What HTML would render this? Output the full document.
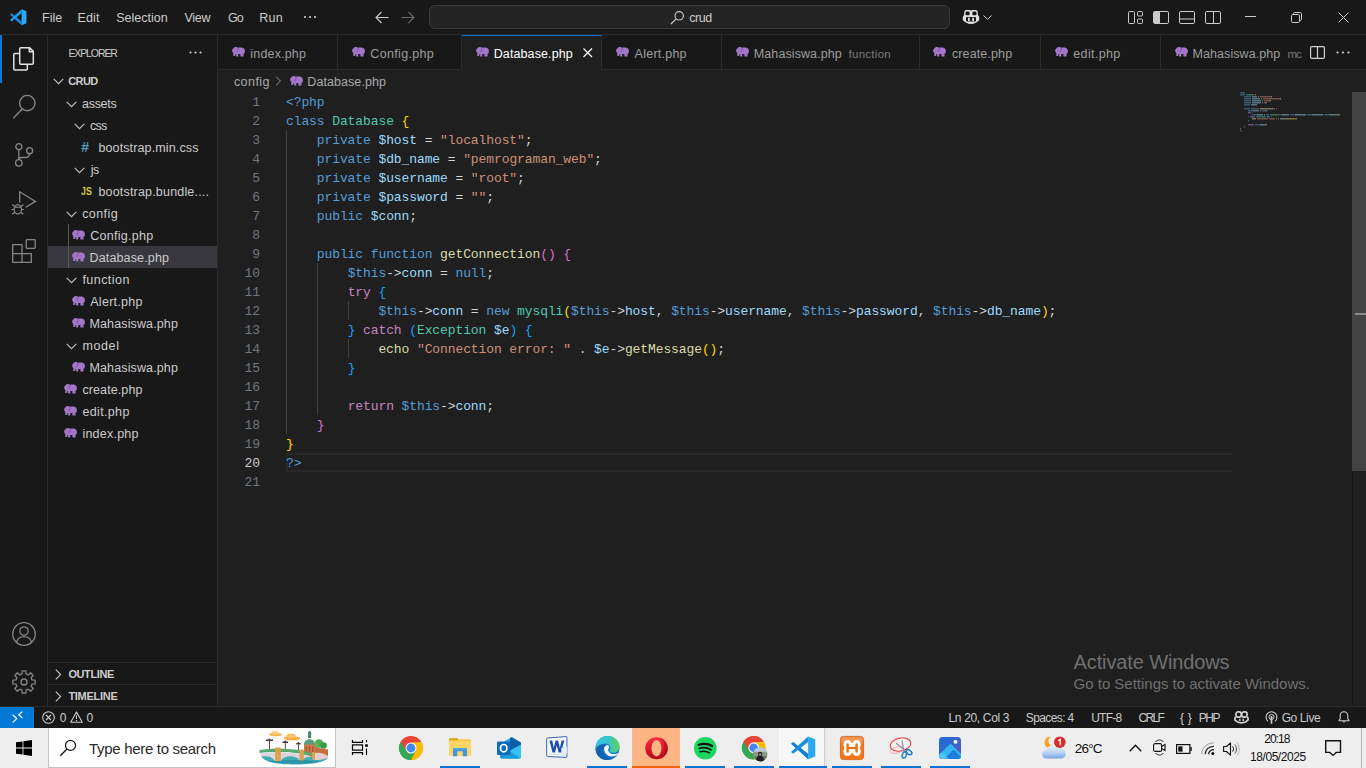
<!DOCTYPE html>
<html>
<head>
<meta charset="utf-8">
<title>Database.php - crud - Visual Studio Code</title>
<style>
*{box-sizing:border-box;margin:0;padding:0}
html,body{width:1366px;height:768px;overflow:hidden;background:#1f1f1f;font-family:"Liberation Sans",sans-serif;font-size:13px;color:#ccc}
.abs{position:absolute}
.t{position:absolute;white-space:pre}
svg{display:block;overflow:visible}
#title{position:absolute;left:0;top:0;width:1366px;height:35px;background:#181818;border-bottom:1px solid #2b2b2b}
#search{position:absolute;left:429px;top:5px;width:521px;height:24px;border:1px solid #3a3a3a;border-radius:6px;background:#242424}
#act{position:absolute;left:0;top:35px;width:48px;height:672px;background:#181818;border-right:1px solid #2b2b2b}
#side{position:absolute;left:48px;top:35px;width:170px;height:672px;background:#181818;border-right:1px solid #2b2b2b}
#tabs{position:absolute;left:218px;top:35px;width:1148px;height:35px;background:#181818;border-bottom:1px solid #2b2b2b}
.tab{position:absolute;top:0;height:35px;border-right:1px solid #2b2b2b}
#ed{position:absolute;left:218px;top:70px;width:1148px;height:637px;background:#1f1f1f}
.ln{position:absolute;left:0;width:42px;text-align:right;height:19px;line-height:19px;font-family:"Liberation Mono",monospace;font-size:13px;letter-spacing:-0.1px;color:#6e7681}
.cl{position:absolute;left:68px;height:19px;line-height:19px;font-family:"Liberation Mono",monospace;font-size:13px;letter-spacing:-0.1px;color:#d4d4d4;white-space:pre}
.k{color:#569cd6}.c{color:#4ec9b0}.v{color:#9cdcfe}.s{color:#ce9178}.f{color:#dcdcaa}.p{color:#c586c0}
.b1{color:#ffd700}.b2{color:#da70d6}.b3{color:#179fff}
.g{position:absolute;width:1px;background:#404040}
#status{position:absolute;left:0;top:706px;width:1366px;height:22px;background:#181818;border-top:1px solid #2b2b2b}
#task{position:absolute;left:0;top:728px;width:1366px;height:40px;background:#eeeeee}
</style>
</head>
<body>
<svg width="0" height="0" style="position:absolute"><defs>
<symbol id="el" viewBox="0 0 13 10"><path d="M1 1.800 C1.500 .6 3 .1 4.100 .1 C5 .1 5.600 .4 6 .8 C7.500 .5 9.300 .5 10.600 .8 C12.100 1.200 12.900 2.600 12.900 4.200 C12.900 5.500 12.300 6.400 11.500 6.900 V9.600 H8.400 V7.100 H6.300 V9.600 H4.200 V7.500 L3.300 7.100 V9 H1.300 V6.100 C.5 5.400 .1 4.500 .1 3.500 C.1 2.800 .4 2.200 1 1.800 Z" fill="#a476c8"/><path d="M5.900 .9 C6.100 2.200 6 3.500 5.500 4.100 C5.100 4.500 4.500 4.500 4.100 4.300" stroke="#6f45a8" stroke-width=".7" fill="none"/></symbol>
<symbol id="chd" viewBox="0 0 11 7"><path d="M.7 .8 L5.500 5.600 L10.300 .8" stroke="#c5c5c5" stroke-width="1.100" fill="none"/></symbol>
<symbol id="chr" viewBox="0 0 7 11"><path d="M.8 .7 L5.600 5.500 L.8 10.300" stroke="#c5c5c5" stroke-width="1.100" fill="none"/></symbol>
<symbol id="chr2" viewBox="0 0 7 11"><path d="M.8 .7 L5.600 5.500 L.8 10.300" stroke="#9a9a9a" stroke-width="1" fill="none"/></symbol>
<symbol id="cop" viewBox="0 0 18 16"><path d="M4.500 1 h3 a2 2 0 0 1 1.500 .8 a2 2 0 0 1 1.500 -.8 h3 a2.300 2.300 0 0 1 2.300 2.300 v2.400 l1.400 2.300 v3 c-1.500 2.300 -5 4 -8.200 4 s-6.700 -1.700 -8.200 -4 v-3 l1.400 -2.300 v-2.400 a2.300 2.300 0 0 1 2.300 -2.300 z" fill="#e0e0e0"/><rect x="3.500" y="2.400" width="4.200" height="3.900" rx="1.300" fill="#181818"/><rect x="10.300" y="2.400" width="4.200" height="3.900" rx="1.300" fill="#181818"/><rect x="4" y="8" width="10" height="4.500" rx="1" fill="#181818"/><rect x="6" y="8.700" width="1.800" height="3.300" fill="#e0e0e0"/><rect x="10.200" y="8.700" width="1.800" height="3.300" fill="#e0e0e0"/></symbol>
</defs></svg>
<div id="title">
<svg class="abs" style="left:9.800px;top:8.700px" width="16.600" height="16.500" viewBox="0 0 100 100" preserveAspectRatio="none"><path d="M0 33 L9 25 L70 75 L70 98 Z" fill="#1690e3"/><path d="M0 67 L9 75 L70 25 L70 2 Z" fill="#1f9cee"/><path d="M70 2 L99 14 L99 86 L70 98 Z" fill="#2ba9f5"/></svg>
<span class="t" style="left:42.10px;top:9.00px;font-size:12.5px;line-height:18px;color:#ccc;letter-spacing:0.003px;">File</span>
<span class="t" style="left:77.50px;top:9.00px;font-size:12.5px;line-height:18px;color:#ccc;letter-spacing:0.145px;">Edit</span>
<span class="t" style="left:116.20px;top:9.00px;font-size:12.5px;line-height:18px;color:#ccc;letter-spacing:0.004px;">Selection</span>
<span class="t" style="left:184.50px;top:9.00px;font-size:12.5px;line-height:18px;color:#ccc;letter-spacing:-0.314px;">View</span>
<span class="t" style="left:228.00px;top:9.00px;font-size:12.5px;line-height:18px;color:#ccc;letter-spacing:-0.923px;">Go</span>
<span class="t" style="left:259.30px;top:9.00px;font-size:12.5px;line-height:18px;color:#ccc;letter-spacing:0.260px;">Run</span>
<svg class="abs" style="left:303px;top:15px" width="14" height="4"><circle cx="2" cy="2" r="1.100" fill="#ccc"/><circle cx="7" cy="2" r="1.100" fill="#ccc"/><circle cx="12" cy="2" r="1.100" fill="#ccc"/></svg>
<svg class="abs" style="left:375px;top:11px" width="14" height="13" viewBox="0 0 14 13"><path d="M6.500 1 L1 6.500 L6.500 12 M1 6.500 H13.500" stroke="#ccc" stroke-width="1.100" fill="none"/></svg>
<svg class="abs" style="left:401px;top:11px" width="14" height="13" viewBox="0 0 14 13"><path d="M7.500 1 L13 6.500 L7.500 12 M13 6.500 H0.500" stroke="#6b6b6b" stroke-width="1.100" fill="none"/></svg>
<div id="search">
<svg class="abs" style="left:240px;top:4px" width="15" height="15" viewBox="0 0 15 15"><circle cx="9.200" cy="5.800" r="4.200" stroke="#ccc" stroke-width="1.100" fill="none"/><path d="M6.200 8.800 L1 14" stroke="#ccc" stroke-width="1.200"/></svg>
<span class="t" style="left:259.20px;top:3.00px;font-size:12.5px;line-height:18px;color:#ccc;letter-spacing:-0.422px;">crud</span>
</div>
<svg class="abs" style="left:962px;top:9px" width="18" height="16"><use href="#cop"/></svg>
<svg class="abs" style="left:983px;top:15px" width="9" height="5" viewBox="0 0 9 5"><path d="M.5 .5 L4.500 4.300 L8.500 .5" stroke="#ccc" stroke-width="1" fill="none"/></svg>
<svg class="abs" style="left:1128px;top:11px" width="15" height="13" viewBox="0 0 15 13"><rect x=".5" y=".5" width="6" height="12" rx="1" stroke="#ccc" fill="none"/><rect x="9.500" y=".5" width="5" height="4.500" rx="1" stroke="#ccc" fill="none"/><rect x="9.500" y="8" width="5" height="4.500" rx="1" stroke="#ccc" fill="none"/></svg>
<svg class="abs" style="left:1153px;top:10.500px" width="16" height="13" viewBox="0 0 16 13"><rect x=".5" y=".5" width="15" height="12" rx="1.300" stroke="#ccc" fill="none"/><path d="M1 1 h6 v11 h-6 z" fill="#ccc"/></svg>
<svg class="abs" style="left:1179px;top:10.500px" width="16" height="13" viewBox="0 0 16 13"><rect x=".5" y=".5" width="15" height="12" rx="1.300" stroke="#ccc" fill="none"/><path d="M.5 8 h15" stroke="#ccc"/></svg>
<svg class="abs" style="left:1205px;top:10.500px" width="16" height="13" viewBox="0 0 16 13"><rect x=".5" y=".5" width="15" height="12" rx="1.300" stroke="#ccc" fill="none"/><path d="M8.500 .5 v12" stroke="#ccc"/></svg>
<svg class="abs" style="left:1245px;top:16px" width="11" height="1"><rect width="11" height="1" fill="#ccc"/></svg>
<svg class="abs" style="left:1291px;top:12px" width="11" height="11" viewBox="0 0 11 11"><rect x=".5" y="2.500" width="8" height="8" rx="1.200" stroke="#ccc" fill="none"/><path d="M2.500 2.500 v-.8 a1.200 1.200 0 0 1 1.200 -1.200 h5.600 a1.200 1.200 0 0 1 1.200 1.200 v5.600 a1.200 1.200 0 0 1 -1.200 1.200 h-.8" stroke="#ccc" fill="none"/></svg>
<svg class="abs" style="left:1338px;top:12px" width="11" height="11" viewBox="0 0 11 11"><path d="M.5 .5 L10.500 10.500 M10.500 .5 L.5 10.500" stroke="#ccc" stroke-width="1" fill="none"/></svg>
</div>
<div id="act">
<div class="abs" style="left:0;top:0;width:2px;height:48px;background:#0078d4"></div>
<svg class="abs" style="left:12px;top:11px" width="24" height="26" viewBox="0 0 24 26"><path d="M7.700 7.600 H2.800 a1 1 0 0 0 -1 1 V23 a1 1 0 0 0 1 1 H14.300 a1 1 0 0 0 1 -1 V18.300" stroke="#e0e0e0" stroke-width="1.500" fill="none"/><path d="M8.700 1.800 H17.700 L21.300 5.400 V17.300 a1 1 0 0 1 -1 1 H8.700 a1 1 0 0 1 -1 -1 V2.800 a1 1 0 0 1 1 -1 z M17.300 2 V5.800 H21" stroke="#e0e0e0" stroke-width="1.500" fill="none" stroke-linejoin="round"/></svg>
<svg class="abs" style="left:12px;top:58px" width="26" height="26" viewBox="0 0 26 26"><circle cx="15.300" cy="10.100" r="7.700" stroke="#868686" stroke-width="1.400" fill="none"/><path d="M10.200 16 L1.300 25.300" stroke="#868686" stroke-width="1.500"/></svg>
<svg class="abs" style="left:12px;top:106px" width="24" height="28" viewBox="0 0 24 28"><circle cx="6.800" cy="5.600" r="3" stroke="#868686" stroke-width="1.300" fill="none"/><circle cx="6.800" cy="21.900" r="3.200" stroke="#868686" stroke-width="1.300" fill="none"/><circle cx="17.600" cy="9.700" r="3" stroke="#868686" stroke-width="1.300" fill="none"/><path d="M6.800 8.600 V18.700 M17.600 12.700 c0 3 -2.500 3.800 -5 3.800 h-3 c-1.500 0 -2.700 .6 -2.700 2" stroke="#868686" stroke-width="1.300" fill="none"/></svg>
<svg class="abs" style="left:10px;top:154px" width="28" height="28" viewBox="0 0 28 28"><path d="M9.700 13.500 V2.800 L25.500 12.400 L15.800 18.300" stroke="#868686" stroke-width="1.300" fill="none" stroke-linejoin="miter"/><ellipse cx="7.800" cy="20.300" rx="3.700" ry="4.600" stroke="#868686" stroke-width="1.300" fill="none"/><path d="M4.500 18.200 h6.600 M1.500 20.500 h2.600 M11.500 20.500 h2.600 M2.200 15.500 l2.600 2 M13.400 15.500 l-2.600 2 M2.200 25.300 l2.600 -2 M13.400 25.300 l-2.600 -2" stroke="#868686" stroke-width="1.200" fill="none"/></svg>
<svg class="abs" style="left:12px;top:203px" width="25" height="25" viewBox="0 0 25 25"><path d="M.7 6.700 H10 V15.700 H19.300 V24.300 H.7 Z M.7 15.700 H10 V24.300" stroke="#868686" stroke-width="1.300" fill="none"/><rect x="14.200" y="1.700" width="9" height="8.600" rx=".8" stroke="#868686" stroke-width="1.300" fill="none"/></svg>
<svg class="abs" style="left:12px;top:587px" width="24" height="24" viewBox="0 0 24 24"><circle cx="12" cy="12" r="11.300" stroke="#868686" stroke-width="1.300" fill="none"/><circle cx="12" cy="9" r="4.200" stroke="#868686" stroke-width="1.300" fill="none"/><path d="M4.500 20.300 c1 -4 4 -5.600 7.500 -5.600 s6.500 1.600 7.500 5.600" stroke="#868686" stroke-width="1.300" fill="none"/></svg>
<svg class="abs" style="left:12px;top:634.700px" width="24" height="24" viewBox="0 0 24 24"><path d="M9.95 3.96 L10.09 0.86 L13.91 0.86 L14.05 3.96 L16.23 4.86 L18.52 2.77 L21.23 5.48 L19.14 7.77 L20.04 9.95 L23.14 10.09 L23.14 13.91 L20.04 14.05 L19.14 16.23 L21.23 18.52 L18.52 21.23 L16.23 19.14 L14.05 20.04 L13.91 23.14 L10.09 23.14 L9.95 20.04 L7.77 19.14 L5.48 21.23 L2.77 18.52 L4.86 16.23 L3.96 14.05 L0.86 13.91 L0.86 10.09 L3.96 9.95 L4.86 7.77 L2.77 5.48 L5.48 2.77 L7.77 4.86 Z" stroke="#868686" stroke-width="1.300" fill="none" stroke-linejoin="round"/><circle cx="12" cy="12" r="3" stroke="#868686" stroke-width="1.300" fill="none"/></svg>
</div>
<div id="side">
<span class="t" style="left:20.40px;top:10.00px;font-size:10.5px;line-height:16px;color:#ccc;letter-spacing:-1.100px;">EXPLORER</span>
<svg class="abs" style="left:141px;top:16px" width="13" height="3"><circle cx="1.500" cy="1.500" r="1.100" fill="#ccc"/><circle cx="6.500" cy="1.500" r="1.100" fill="#ccc"/><circle cx="11.500" cy="1.500" r="1.100" fill="#ccc"/></svg>
<div class="abs" style="left:0;top:211px;width:169px;height:22px;background:#37373d"></div>
<div class="abs" style="left:20px;top:189px;width:1px;height:44px;background:#585858"></div>
<svg class="abs" style="left:5px;top:43px" width="11" height="7"><use href="#chd"/></svg>
<span class="t" style="left:20.30px;top:38.00px;font-size:11px;line-height:16px;color:#ccc;letter-spacing:-0.644px;font-weight:bold;">CRUD</span>
<svg class="abs" style="left:18px;top:65.5px" width="11" height="7"><use href="#chd"/></svg>
<span class="t" style="left:34.10px;top:60.00px;font-size:12.5px;line-height:18px;color:#ccc;letter-spacing:-0.315px;">assets</span>
<svg class="abs" style="left:26px;top:87.5px" width="11" height="7"><use href="#chd"/></svg>
<span class="t" style="left:42.00px;top:82.00px;font-size:12.5px;line-height:18px;color:#ccc;letter-spacing:-0.750px;">css</span>
<span class="t" style="left:33.30px;top:102.00px;font-size:14px;line-height:20px;color:#519aba;letter-spacing:0.000px;font-weight:bold;">#</span>
<span class="t" style="left:50.40px;top:104.00px;font-size:12.5px;line-height:18px;color:#ccc;letter-spacing:0.131px;">bootstrap.min.css</span>
<svg class="abs" style="left:26px;top:131.5px" width="11" height="7"><use href="#chd"/></svg>
<span class="t" style="left:42.70px;top:126.00px;font-size:12.5px;line-height:18px;color:#ccc;letter-spacing:-0.477px;">js</span>
<span class="t" style="left:33.40px;top:148.00px;font-size:10.5px;line-height:16px;color:#cbcb41;letter-spacing:0.000px;font-weight:bold;transform:scaleX(.84);transform-origin:0 0;">JS</span>
<span class="t" style="left:50.40px;top:148.00px;font-size:12.5px;line-height:18px;color:#ccc;letter-spacing:0.187px;">bootstrap.bundle....</span>
<svg class="abs" style="left:18px;top:175.5px" width="11" height="7"><use href="#chd"/></svg>
<span class="t" style="left:34.20px;top:170.00px;font-size:12.5px;line-height:18px;color:#ccc;letter-spacing:0.419px;">config</span>
<svg class="abs" style="left:23.5px;top:195px" width="13" height="10"><use href="#el"/></svg>
<span class="t" style="left:42.25px;top:192.00px;font-size:12.5px;line-height:18px;color:#ccc;letter-spacing:0.282px;">Config.php</span>
<svg class="abs" style="left:23.5px;top:217px" width="13" height="10"><use href="#el"/></svg>
<span class="t" style="left:41.50px;top:214.00px;font-size:12.5px;line-height:18px;color:#ccc;letter-spacing:0.147px;">Database.php</span>
<svg class="abs" style="left:18px;top:241.5px" width="11" height="7"><use href="#chd"/></svg>
<span class="t" style="left:34.40px;top:236.00px;font-size:12.5px;line-height:18px;color:#ccc;letter-spacing:0.453px;">function</span>
<svg class="abs" style="left:23.5px;top:261px" width="13" height="10"><use href="#el"/></svg>
<span class="t" style="left:42.25px;top:258.00px;font-size:12.5px;line-height:18px;color:#ccc;letter-spacing:0.271px;">Alert.php</span>
<svg class="abs" style="left:23.5px;top:283px" width="13" height="10"><use href="#el"/></svg>
<span class="t" style="left:41.50px;top:280.00px;font-size:12.5px;line-height:18px;color:#ccc;letter-spacing:0.125px;">Mahasiswa.php</span>
<svg class="abs" style="left:18px;top:307.5px" width="11" height="7"><use href="#chd"/></svg>
<span class="t" style="left:34.40px;top:302.00px;font-size:12.5px;line-height:18px;color:#ccc;letter-spacing:0.633px;">model</span>
<svg class="abs" style="left:23.5px;top:327px" width="13" height="10"><use href="#el"/></svg>
<span class="t" style="left:41.50px;top:324.00px;font-size:12.5px;line-height:18px;color:#ccc;letter-spacing:0.125px;">Mahasiswa.php</span>
<svg class="abs" style="left:15.5px;top:349px" width="13" height="10"><use href="#el"/></svg>
<span class="t" style="left:34.40px;top:346.00px;font-size:12.5px;line-height:18px;color:#ccc;letter-spacing:0.109px;">create.php</span>
<svg class="abs" style="left:15.5px;top:371px" width="13" height="10"><use href="#el"/></svg>
<span class="t" style="left:34.40px;top:368.00px;font-size:12.5px;line-height:18px;color:#ccc;letter-spacing:0.353px;">edit.php</span>
<svg class="abs" style="left:15.5px;top:393px" width="13" height="10"><use href="#el"/></svg>
<span class="t" style="left:34.40px;top:390.00px;font-size:12.5px;line-height:18px;color:#ccc;letter-spacing:0.230px;">index.php</span>
<div class="abs" style="left:0;top:627px;width:169px;height:1px;background:#2b2b2b"></div>
<svg class="abs" style="left:7px;top:634px" width="7" height="11"><use href="#chr"/></svg>
<span class="t" style="left:20.40px;top:631.00px;font-size:11px;line-height:16px;color:#ccc;letter-spacing:-0.390px;font-weight:bold;">OUTLINE</span>
<div class="abs" style="left:0;top:649px;width:169px;height:1px;background:#2b2b2b"></div>
<svg class="abs" style="left:7px;top:656px" width="7" height="11"><use href="#chr"/></svg>
<span class="t" style="left:20.40px;top:653.00px;font-size:11px;line-height:16px;color:#ccc;letter-spacing:-0.271px;font-weight:bold;">TIMELINE</span>
</div>
<div id="tabs">
<div class="tab" style="left:0px;width:120px;"><svg class="abs" style="left:13.5px;top:12px" width="13" height="10"><use href="#el"/></svg><span class="t" style="left:32.30px;top:10.00px;font-size:12.5px;line-height:18px;color:#9d9d9d;letter-spacing:0.180px;">index.php</span></div>
<div class="tab" style="left:120px;width:124px;"><svg class="abs" style="left:13.5px;top:12px" width="13" height="10"><use href="#el"/></svg><span class="t" style="left:32.30px;top:10.00px;font-size:12.5px;line-height:18px;color:#9d9d9d;letter-spacing:0.332px;">Config.php</span></div>
<div class="tab" style="left:244px;width:140px;background:#1f1f1f;border-top:1px solid #0078d4;height:36px;"><svg class="abs" style="left:13.5px;top:11px" width="13" height="10"><use href="#el"/></svg><span class="t" style="left:31.70px;top:9.00px;font-size:12.5px;line-height:18px;color:#fff;letter-spacing:0.110px;">Database.php</span><svg class="abs" style="left:121px;top:12px" width="10" height="10" viewBox="0 0 10 10"><path d="M.5 .5 L9 9 M9 .5 L.5 9" stroke="#fff" stroke-width="1.200"/></svg></div>
<div class="tab" style="left:384px;width:120px;"><svg class="abs" style="left:13.5px;top:12px" width="13" height="10"><use href="#el"/></svg><span class="t" style="left:32.60px;top:10.00px;font-size:12.5px;line-height:18px;color:#9d9d9d;letter-spacing:0.240px;">Alert.php</span></div>
<div class="tab" style="left:504px;width:198px;"><svg class="abs" style="left:13.5px;top:12px" width="13" height="10"><use href="#el"/></svg><span class="t" style="left:31.80px;top:10.00px;font-size:12.5px;line-height:18px;color:#9d9d9d;letter-spacing:0.092px;">Mahasiswa.php</span><span class="t" style="left:126.50px;top:11.00px;font-size:11.5px;line-height:16px;color:#7a7a7a;letter-spacing:0.274px;">function</span></div>
<div class="tab" style="left:702px;width:121px;"><svg class="abs" style="left:13px;top:12px" width="13" height="10"><use href="#el"/></svg><span class="t" style="left:31.90px;top:10.00px;font-size:12.5px;line-height:18px;color:#9d9d9d;letter-spacing:0.131px;">create.php</span></div>
<div class="tab" style="left:823px;width:120px;"><svg class="abs" style="left:13.5px;top:12px" width="13" height="10"><use href="#el"/></svg><span class="t" style="left:32.30px;top:10.00px;font-size:12.5px;line-height:18px;color:#9d9d9d;letter-spacing:0.353px;">edit.php</span></div>
<div class="tab" style="left:943px;width:142px;border-right:none;overflow:hidden;width:142px;"><svg class="abs" style="left:13.5px;top:12px" width="13" height="10"><use href="#el"/></svg><span class="t" style="left:31.50px;top:10.00px;font-size:12.5px;line-height:18px;color:#9d9d9d;letter-spacing:0.075px;">Mahasiswa.php</span><span class="t" style="left:126.50px;top:11.00px;font-size:11.5px;line-height:16px;color:#7a7a7a;letter-spacing:-1.180px;">mc</span></div>
<svg class="abs" style="left:1092px;top:11px" width="15" height="13" viewBox="0 0 15 13"><rect x=".6" y=".6" width="13.800" height="11.800" rx="1.200" stroke="#d0d0d0" stroke-width="1.200" fill="none"/><path d="M7.500 .6 v11.800" stroke="#d0d0d0" stroke-width="1.200"/></svg>
<svg class="abs" style="left:1118px;top:16px" width="14" height="3"><circle cx="1.500" cy="1.500" r="1.100" fill="#d0d0d0"/><circle cx="7" cy="1.500" r="1.100" fill="#d0d0d0"/><circle cx="12.500" cy="1.500" r="1.100" fill="#d0d0d0"/></svg>
</div>
<div id="ed">
<span class="t" style="left:15.90px;top:3.00px;font-size:12.5px;line-height:18px;color:#a9a9a9;letter-spacing:0.459px;">config</span>
<svg class="abs" style="left:57px;top:6px" width="7" height="10"><use href="#chr2"/></svg>
<svg class="abs" style="left:71.5px;top:6px" width="13" height="10"><use href="#el"/></svg>
<span class="t" style="left:89.30px;top:3.00px;font-size:12.5px;line-height:18px;color:#a9a9a9;letter-spacing:0.074px;">Database.php</span>
<div class="abs" style="left:68px;top:383px;width:946px;height:19px;border:2px solid #282828;border-right:none"></div>
<div class="g" style="left:68px;top:60px;height:304px"></div>
<div class="g" style="left:99px;top:193px;height:152px"></div>
<div class="g" style="left:130px;top:231px;height:19px"></div>
<div class="g" style="left:130px;top:269px;height:19px"></div>
<div class="ln" style="top:23px">1</div>
<div class="cl" style="top:23px"><span class="k">&lt;?php</span></div>
<div class="ln" style="top:42px">2</div>
<div class="cl" style="top:42px"><span class="k">class</span> <span class="c">Database</span> <span class="b1">{</span></div>
<div class="ln" style="top:61px">3</div>
<div class="cl" style="top:61px">    <span class="k">private</span> <span class="v">$host</span> = <span class="s">&quot;localhost&quot;</span>;</div>
<div class="ln" style="top:80px">4</div>
<div class="cl" style="top:80px">    <span class="k">private</span> <span class="v">$db_name</span> = <span class="s">&quot;pemrograman_web&quot;</span>;</div>
<div class="ln" style="top:99px">5</div>
<div class="cl" style="top:99px">    <span class="k">private</span> <span class="v">$username</span> = <span class="s">&quot;root&quot;</span>;</div>
<div class="ln" style="top:118px">6</div>
<div class="cl" style="top:118px">    <span class="k">private</span> <span class="v">$password</span> = <span class="s">&quot;&quot;</span>;</div>
<div class="ln" style="top:137px">7</div>
<div class="cl" style="top:137px">    <span class="k">public</span> <span class="v">$conn</span>;</div>
<div class="ln" style="top:156px">8</div>
<div class="ln" style="top:175px">9</div>
<div class="cl" style="top:175px">    <span class="k">public</span> <span class="k">function</span> <span class="f">getConnection</span><span class="b2">()</span> <span class="b2">{</span></div>
<div class="ln" style="top:194px">10</div>
<div class="cl" style="top:194px">        <span class="k">$this</span>-&gt;<span class="v">conn</span> = <span class="k">null</span>;</div>
<div class="ln" style="top:213px">11</div>
<div class="cl" style="top:213px">        <span class="p">try</span> <span class="b3">{</span></div>
<div class="ln" style="top:232px">12</div>
<div class="cl" style="top:232px">            <span class="k">$this</span>-&gt;<span class="v">conn</span> = <span class="k">new</span> <span class="c">mysqli</span><span class="b1">(</span><span class="k">$this</span>-&gt;<span class="v">host</span>, <span class="k">$this</span>-&gt;<span class="v">username</span>, <span class="k">$this</span>-&gt;<span class="v">password</span>, <span class="k">$this</span>-&gt;<span class="v">db_name</span><span class="b1">)</span>;</div>
<div class="ln" style="top:251px">13</div>
<div class="cl" style="top:251px">        <span class="b3">}</span> <span class="p">catch</span> <span class="b3">(</span><span class="c">Exception</span> <span class="v">$e</span><span class="b3">)</span> <span class="b3">{</span></div>
<div class="ln" style="top:270px">14</div>
<div class="cl" style="top:270px">            <span class="f">echo</span> <span class="s">&quot;Connection error: &quot;</span> . <span class="v">$e</span>-&gt;<span class="f">getMessage</span><span class="b1">()</span>;</div>
<div class="ln" style="top:289px">15</div>
<div class="cl" style="top:289px">        <span class="b3">}</span></div>
<div class="ln" style="top:308px">16</div>
<div class="ln" style="top:327px">17</div>
<div class="cl" style="top:327px">        <span class="p">return</span> <span class="k">$this</span>-&gt;<span class="v">conn</span>;</div>
<div class="ln" style="top:346px">18</div>
<div class="cl" style="top:346px">    <span class="b2">}</span></div>
<div class="ln" style="top:365px">19</div>
<div class="cl" style="top:365px"><span class="b1">}</span></div>
<div class="ln" style="top:384px;color:#ccc">20</div>
<div class="cl" style="top:384px"><span class="k">?&gt;</span></div>
<div class="ln" style="top:403px">21</div>
<svg class="abs" style="left:1022px;top:22px;opacity:.45" width="112" height="44" viewBox="0 0 112 44"><rect x="0" y="0" width="5" height="1.500" fill="#569cd6"/><rect x="0" y="2" width="5" height="1.500" fill="#569cd6"/><rect x="6" y="2" width="8" height="1.500" fill="#4ec9b0"/><rect x="15" y="2" width="1" height="1.500" fill="#ffd700"/><rect x="4" y="4" width="7" height="1.500" fill="#569cd6"/><rect x="12" y="4" width="5" height="1.500" fill="#9cdcfe"/><rect x="18" y="4" width="1" height="1.500" fill="#d4d4d4"/><rect x="20" y="4" width="11" height="1.500" fill="#ce9178"/><rect x="31" y="4" width="1" height="1.500" fill="#d4d4d4"/><rect x="4" y="6" width="7" height="1.500" fill="#569cd6"/><rect x="12" y="6" width="8" height="1.500" fill="#9cdcfe"/><rect x="21" y="6" width="1" height="1.500" fill="#d4d4d4"/><rect x="23" y="6" width="17" height="1.500" fill="#ce9178"/><rect x="40" y="6" width="1" height="1.500" fill="#d4d4d4"/><rect x="4" y="8" width="7" height="1.500" fill="#569cd6"/><rect x="12" y="8" width="9" height="1.500" fill="#9cdcfe"/><rect x="22" y="8" width="1" height="1.500" fill="#d4d4d4"/><rect x="24" y="8" width="6" height="1.500" fill="#ce9178"/><rect x="30" y="8" width="1" height="1.500" fill="#d4d4d4"/><rect x="4" y="10" width="7" height="1.500" fill="#569cd6"/><rect x="12" y="10" width="9" height="1.500" fill="#9cdcfe"/><rect x="22" y="10" width="1" height="1.500" fill="#d4d4d4"/><rect x="24" y="10" width="2" height="1.500" fill="#ce9178"/><rect x="26" y="10" width="1" height="1.500" fill="#d4d4d4"/><rect x="4" y="12" width="6" height="1.500" fill="#569cd6"/><rect x="11" y="12" width="5" height="1.500" fill="#9cdcfe"/><rect x="16" y="12" width="1" height="1.500" fill="#d4d4d4"/><rect x="4" y="16" width="6" height="1.500" fill="#569cd6"/><rect x="11" y="16" width="8" height="1.500" fill="#569cd6"/><rect x="20" y="16" width="13" height="1.500" fill="#dcdcaa"/><rect x="33" y="16" width="2" height="1.500" fill="#da70d6"/><rect x="36" y="16" width="1" height="1.500" fill="#da70d6"/><rect x="8" y="18" width="5" height="1.500" fill="#569cd6"/><rect x="13" y="18" width="2" height="1.500" fill="#d4d4d4"/><rect x="15" y="18" width="4" height="1.500" fill="#9cdcfe"/><rect x="20" y="18" width="1" height="1.500" fill="#d4d4d4"/><rect x="22" y="18" width="4" height="1.500" fill="#569cd6"/><rect x="26" y="18" width="1" height="1.500" fill="#d4d4d4"/><rect x="8" y="20" width="3" height="1.500" fill="#c586c0"/><rect x="12" y="20" width="1" height="1.500" fill="#179fff"/><rect x="12" y="22" width="5" height="1.500" fill="#569cd6"/><rect x="17" y="22" width="2" height="1.500" fill="#d4d4d4"/><rect x="19" y="22" width="4" height="1.500" fill="#9cdcfe"/><rect x="24" y="22" width="1" height="1.500" fill="#d4d4d4"/><rect x="26" y="22" width="3" height="1.500" fill="#569cd6"/><rect x="30" y="22" width="6" height="1.500" fill="#4ec9b0"/><rect x="36" y="22" width="1" height="1.500" fill="#ffd700"/><rect x="37" y="22" width="5" height="1.500" fill="#569cd6"/><rect x="42" y="22" width="2" height="1.500" fill="#d4d4d4"/><rect x="44" y="22" width="4" height="1.500" fill="#9cdcfe"/><rect x="48" y="22" width="1" height="1.500" fill="#d4d4d4"/><rect x="50" y="22" width="5" height="1.500" fill="#569cd6"/><rect x="55" y="22" width="2" height="1.500" fill="#d4d4d4"/><rect x="57" y="22" width="8" height="1.500" fill="#9cdcfe"/><rect x="65" y="22" width="1" height="1.500" fill="#d4d4d4"/><rect x="67" y="22" width="5" height="1.500" fill="#569cd6"/><rect x="72" y="22" width="2" height="1.500" fill="#d4d4d4"/><rect x="74" y="22" width="8" height="1.500" fill="#9cdcfe"/><rect x="82" y="22" width="1" height="1.500" fill="#d4d4d4"/><rect x="84" y="22" width="5" height="1.500" fill="#569cd6"/><rect x="89" y="22" width="2" height="1.500" fill="#d4d4d4"/><rect x="91" y="22" width="7" height="1.500" fill="#9cdcfe"/><rect x="98" y="22" width="1" height="1.500" fill="#ffd700"/><rect x="99" y="22" width="1" height="1.500" fill="#d4d4d4"/><rect x="8" y="24" width="1" height="1.500" fill="#179fff"/><rect x="10" y="24" width="5" height="1.500" fill="#c586c0"/><rect x="16" y="24" width="1" height="1.500" fill="#179fff"/><rect x="17" y="24" width="9" height="1.500" fill="#4ec9b0"/><rect x="27" y="24" width="2" height="1.500" fill="#9cdcfe"/><rect x="29" y="24" width="1" height="1.500" fill="#179fff"/><rect x="31" y="24" width="1" height="1.500" fill="#179fff"/><rect x="12" y="26" width="4" height="1.500" fill="#dcdcaa"/><rect x="17" y="26" width="11" height="1.500" fill="#ce9178"/><rect x="29" y="26" width="6" height="1.500" fill="#ce9178"/><rect x="36" y="26" width="1" height="1.500" fill="#ce9178"/><rect x="38" y="26" width="1" height="1.500" fill="#d4d4d4"/><rect x="40" y="26" width="2" height="1.500" fill="#9cdcfe"/><rect x="42" y="26" width="2" height="1.500" fill="#d4d4d4"/><rect x="44" y="26" width="10" height="1.500" fill="#dcdcaa"/><rect x="54" y="26" width="2" height="1.500" fill="#ffd700"/><rect x="56" y="26" width="1" height="1.500" fill="#d4d4d4"/><rect x="8" y="28" width="1" height="1.500" fill="#179fff"/><rect x="8" y="32" width="6" height="1.500" fill="#c586c0"/><rect x="15" y="32" width="5" height="1.500" fill="#569cd6"/><rect x="20" y="32" width="2" height="1.500" fill="#d4d4d4"/><rect x="22" y="32" width="4" height="1.500" fill="#9cdcfe"/><rect x="26" y="32" width="1" height="1.500" fill="#d4d4d4"/><rect x="4" y="34" width="1" height="1.500" fill="#da70d6"/><rect x="0" y="36" width="1" height="1.500" fill="#ffd700"/><rect x="0" y="38" width="2" height="1.500" fill="#569cd6"/></svg>
<div class="abs" style="left:1134px;top:22px;width:14px;height:379px;background:#434343"></div>
<div class="abs" style="left:1137px;top:243px;width:11px;height:2px;background:#8a8a8a"></div>
<div class="abs" style="left:1134px;top:401px;width:1px;height:236px;background:#151515"></div>
<span class="t" style="left:855.60px;top:579.00px;font-size:20px;line-height:26px;color:#707070;letter-spacing:-0.122px;">Activate Windows</span>
<span class="t" style="left:855.60px;top:603.00px;font-size:15px;line-height:21px;color:#707070;letter-spacing:-0.015px;">Go to Settings to activate Windows.</span>
</div>
<div id="status">
<div class="abs" style="left:0;top:0;width:34px;height:21px;background:#0078d4"></div>
<svg class="abs" style="left:12px;top:4px" width="11" height="12" viewBox="0 0 11 12"><path d="M.7 3.800 L4.800 7.600 L.7 11.400 M10.300 .6 L6.800 3.800 L10.300 7" stroke="#fff" stroke-width="1.200" fill="none"/></svg>
<svg class="abs" style="left:42px;top:3.500px" width="13" height="13" viewBox="0 0 13 13"><circle cx="6.500" cy="6.500" r="5.800" stroke="#ccc" stroke-width="1.100" fill="none"/><path d="M4 4 L9 9 M9 4 L4 9" stroke="#ccc" stroke-width="1.100"/></svg>
<span class="t" style="left:59.70px;top:2.00px;font-size:12px;line-height:18px;color:#ccc;letter-spacing:0.000px;">0</span>
<svg class="abs" style="left:70px;top:4px" width="13" height="12" viewBox="0 0 13 12"><path d="M6.500 .9 L12.300 11.300 H.7 Z" stroke="#ccc" stroke-width="1.100" fill="none" stroke-linejoin="round"/><path d="M6.500 4.300 V8 M6.500 9 V10.200" stroke="#ccc" stroke-width="1.100"/></svg>
<span class="t" style="left:86.60px;top:2.00px;font-size:12px;line-height:18px;color:#ccc;letter-spacing:0.000px;">0</span>
<span class="t" style="left:948.50px;top:2.00px;font-size:12px;line-height:18px;color:#ccc;letter-spacing:-0.340px;">Ln 20, Col 3</span>
<span class="t" style="left:1025.80px;top:2.00px;font-size:12px;line-height:18px;color:#ccc;letter-spacing:-0.612px;">Spaces: 4</span>
<span class="t" style="left:1091.20px;top:2.00px;font-size:12px;line-height:18px;color:#ccc;letter-spacing:-0.756px;">UTF-8</span>
<span class="t" style="left:1138.40px;top:2.00px;font-size:12px;line-height:18px;color:#ccc;letter-spacing:-1.602px;">CRLF</span>
<span class="t" style="left:1179.90px;top:2.00px;font-size:12px;line-height:18px;color:#ccc;letter-spacing:3.792px;">{}</span>
<span class="t" style="left:1198.70px;top:2.00px;font-size:12px;line-height:18px;color:#ccc;letter-spacing:-1.485px;">PHP</span>
<span class="t" style="left:1281.70px;top:2.00px;font-size:12px;line-height:18px;color:#ccc;letter-spacing:-0.397px;">Go Live</span>
<svg class="abs" style="left:1233.500px;top:4px" width="15" height="13" viewBox="0 0 16 14"><rect x="2" y="1" width="5.700" height="5.600" rx="2.200" stroke="#d4d4d4" stroke-width="1.800" fill="none"/><rect x="8.300" y="1" width="5.700" height="5.600" rx="2.200" stroke="#d4d4d4" stroke-width="1.800" fill="none"/><path d="M1.500 6.300 C.8 7.500 .8 9.300 1.300 10.200 C3.200 12 6 12.800 8 12.800 C10 12.800 12.800 12 14.700 10.200 C15.200 9.300 15.200 7.500 14.500 6.300" stroke="#d4d4d4" stroke-width="1.800" fill="none"/><path d="M6.200 8.300 V10.800 M9.800 8.300 V10.800" stroke="#d4d4d4" stroke-width="1.500"/></svg>
<svg class="abs" style="left:1265px;top:4px" width="13" height="13" viewBox="0 0 13 13"><path d="M3 10.300 A5.400 5.400 0 1 1 10 10.300" stroke="#ccc" stroke-width="1.100" fill="none"/><circle cx="6.500" cy="6" r="2.600" stroke="#ccc" stroke-width="1" fill="none"/><path d="M6.500 6 V12.800" stroke="#ccc" stroke-width="1.700"/><circle cx="6.500" cy="6" r="1.100" fill="#ccc"/></svg>
<svg class="abs" style="left:1338px;top:4px" width="12" height="13" viewBox="0 0 12 13"><path d="M6 .8 C3.500 .8 2.200 2.700 2.200 4.800 V7.600 L.9 9.800 H11.100 L9.800 7.600 V4.800 C9.800 2.700 8.500 .8 6 .8 Z" stroke="#ccc" stroke-width="1.100" fill="none" stroke-linejoin="round"/><path d="M4.700 10.200 a1.400 1.400 0 0 0 2.600 0" stroke="#ccc" stroke-width="1" fill="none"/></svg>
</div>
<div id="task">
<svg class="abs" style="left:16px;top:12px" width="16" height="16" viewBox="0 0 16 16"><path d="M0 2.300 L6.600 1.400 V7.600 H0 Z M7.400 1.300 L16 0 V7.600 H7.400 Z M0 8.400 H6.600 V14.600 L0 13.700 Z M7.400 8.400 H16 V16 L7.400 14.700 Z" fill="#000"/></svg>
<div class="abs" style="left:48px;top:0;width:288px;height:40px;background:#fff;border:1px solid #c4c4c4;border-top:none"></div>
<svg class="abs" style="left:60px;top:12px" width="17" height="17" viewBox="0 0 17 17"><circle cx="10.500" cy="5.400" r="5" stroke="#111" stroke-width="1.200" fill="none"/><path d="M7 9 L.3 15.700" stroke="#111" stroke-width="1.300"/></svg>
<span class="t" style="left:89.00px;top:9.60px;font-size:15px;line-height:21px;color:#2a2a2a;letter-spacing:-0.307px;">Type here to search</span>
<svg class="abs" style="left:258px;top:2px" width="74" height="36" viewBox="0 0 74 36">
<ellipse cx="17.500" cy="4.600" rx="6.800" ry="1.600" fill="#f9b24e"/><ellipse cx="16.800" cy="3" rx="3.600" ry="1.900" fill="#fbc876"/>
<ellipse cx="34" cy="8.300" rx="8.400" ry="1.900" fill="#f9a83a"/><ellipse cx="33" cy="6" rx="4.800" ry="2.600" fill="#fbc066"/>
<path d="M3 25 C14 24 58 24 70 26 C70 31 60 34.500 38 34.500 C14 34.500 4 31 3 25 Z" fill="#43adb6"/>
<path d="M10 31 C24 29.500 50 29.500 62 31 C54 34.600 20 34.600 10 31 Z" fill="#2b95a6"/>
<circle cx="61" cy="13.500" r="4.300" fill="#4fae4f"/><circle cx="65.500" cy="15.500" r="3.300" fill="#3d9a44"/><circle cx="57.500" cy="15.500" r="2.800" fill="#62b95a"/>
<path d="M56.500 17 L70 19.500 V27 C67 29.500 60 30 56.500 29 Z" fill="#c46f43"/><path d="M56 23 C62 22 68.500 24 70.500 27 C67 30 58 30.500 55 29.500 Z" fill="#e6cfd0"/>
<rect x="46" y="14" width="11" height="13" fill="#c97a4d"/><path d="M46 14.500 C46 7.500 57 7.500 57 14.500 Z" fill="#5a9e7c"/><rect x="50" y="2.500" width="3.200" height="5.500" fill="#4d8a6c"/><circle cx="51.600" cy="2.300" r="1.200" fill="#3f7a5e"/>
<rect x="47.500" y="16.500" width="1.400" height="6" fill="#a75a36"/><rect x="50.800" y="16.500" width="1.400" height="6" fill="#a75a36"/><rect x="54" y="16.500" width="1.400" height="6" fill="#a75a36"/>
<path d="M11.500 11 V19 M27.300 13 V19.500 M40.500 14.500 V20.500" stroke="#4a3340" stroke-width=".9"/><path d="M8 10.300 h7 M24.500 12.300 h5.600 M38.300 13.800 h4.400" stroke="#4a3340" stroke-width="1.500"/><circle cx="11.500" cy="9.300" r=".9" fill="#4a3340"/><circle cx="27.300" cy="11.300" r=".9" fill="#4a3340"/><circle cx="40.500" cy="12.900" r=".8" fill="#4a3340"/>
<path d="M1.500 20 C16 18 38 18.500 50 22 L56 24.500 V26.500 L48 24.800 C36 21.800 16 21.500 1.500 23 Z" fill="#58a86a"/>
<path d="M2.500 23 C14 21.500 36 21.800 49 25 L54 27 C48 26.500 46 28 45 30 H41.500 C38 24.800 26 24.800 22.500 31 H17 C15 26.500 8 25.500 3 26.500 Z" fill="#dcd6e0"/>
<rect x="17.200" y="17.500" width="5.600" height="13.500" rx=".8" fill="#d9a24e"/><rect x="41.500" y="19.500" width="4.300" height="11" rx=".8" fill="#d9a24e"/><rect x="54" y="22" width="3" height="7.500" rx=".6" fill="#d9a24e"/>
</svg>
<svg class="abs" style="left:351px;top:12px" width="18" height="16" viewBox="0 0 18 16"><path d="M1.500 0 V2.300 H11.500 V0 M1.500 15 V12.600 H11.500 V15" stroke="#000" stroke-width="1.200" fill="none"/><rect x="1.500" y="4.900" width="10" height="5.200" stroke="#000" stroke-width="1.200" fill="none"/><rect x="14.200" y="4.300" width="2.600" height="2.500" fill="#000"/><path d="M15.500 0 V2.300 M15.500 8.500 V15" stroke="#000" stroke-width="1.100"/></svg>
<div class="abs" style="left:440px;top:38px;width:40px;height:2px;background:#0a74d6"></div>
<div class="abs" style="left:587px;top:38px;width:40px;height:2px;background:#0a74d6"></div>
<div class="abs" style="left:632px;top:0;width:48px;height:40px;background:#fdb683"></div>
<div class="abs" style="left:632px;top:38px;width:48px;height:2px;background:#f7630c"></div>
<div class="abs" style="left:685px;top:38px;width:40px;height:2px;background:#0a74d6"></div>
<div class="abs" style="left:734px;top:38px;width:40px;height:2px;background:#0a74d6"></div>
<div class="abs" style="left:779px;top:0;width:45px;height:40px;background:#f7f7f7"></div>
<div class="abs" style="left:824px;top:0;width:1px;height:40px;background:#cfcfcf"></div>
<div class="abs" style="left:825px;top:0;width:2px;height:40px;background:#e6e6e6"></div>
<div class="abs" style="left:779px;top:38px;width:48px;height:2px;background:#0a74d6"></div>
<div class="abs" style="left:832px;top:38px;width:40px;height:2px;background:#0a74d6"></div>
<div class="abs" style="left:881px;top:38px;width:40px;height:2px;background:#0a74d6"></div>
<div class="abs" style="left:930px;top:38px;width:40px;height:2px;background:#0a74d6"></div>
<svg class="abs" style="left:399px;top:8px" width="24" height="24" viewBox="0 0 48 48">
<path d="M24 24 L3.200 12 A24 24 0 0 1 44.800 12 Z" fill="#ea4335"/>
<path d="M24 24 L44.800 12 A24 24 0 0 1 24 48 Z" fill="#fbbc04"/>
<path d="M24 24 L24 48 A24 24 0 0 1 3.200 12 Z" fill="#34a853"/>
<path d="M24 13 H44.300 A24 24 0 0 0 3.200 12 L13.500 29.500 Z" fill="#ea4335"/>
<path d="M33.500 29.500 L24 48 A24 24 0 0 0 44.800 12 L24 13 Z" fill="#fbbc04"/>
<path d="M14.500 29.500 L3.200 12 A24 24 0 0 0 24 48 L33.500 29.500 Z" fill="#34a853"/>
<circle cx="24" cy="24" r="11" fill="#fff"/><circle cx="24" cy="24" r="8.800" fill="#4285f4"/></svg>
<svg class="abs" style="left:449px;top:10px" width="22" height="19" viewBox="0 0 22 19"><path d="M0 1.200 a1 1 0 0 1 1 -1 h7.500 l1.500 2 h-10 z" fill="#e3a008"/><path d="M0 2 H9.500 L10.500 1.500 H21 a1 1 0 0 1 1 1 V17.500 a.6 .6 0 0 1 -.6 .6 H.6 a.6 .6 0 0 1 -.6 -.6 Z" fill="#fdd667"/><path d="M0 3 H22 V2.500 a1 1 0 0 0 -1 -1 H10.500 L9.500 2 H0 Z" fill="#f6c445"/><path d="M4 18.300 V11 a1 1 0 0 1 1 -1 H17 a1 1 0 0 1 1 1 V18.300 H13.800 V13.300 H8.200 V18.300 Z" fill="#3b93e3"/><path d="M4 12.500 H18 V11 a1 1 0 0 0 -1 -1 H5 a1 1 0 0 0 -1 1 Z" fill="#4ba3ef"/></svg>
<svg class="abs" style="left:497px;top:9px" width="24" height="22" viewBox="0 0 24 22"><path d="M7 4.500 L14 .4 a1.500 1.500 0 0 1 1.500 0 L23.200 5 a1.500 1.500 0 0 1 .8 1.300 V19.500 a2 2 0 0 1 -2 2 H5 a2 2 0 0 1 -2 -2 V17 Z" fill="#28a8ea"/><path d="M14.700 .3 L23.400 5.200 a1.200 1.200 0 0 1 .6 1 V8 L13 14.500 V1 Z" fill="#0a5ea8"/><path d="M12 14 L24 7.500 V19.500 a2 2 0 0 1 -2 2 H12 Z" fill="#35c2f3"/><path d="M3 17 L12 14 L23 21 a2 2 0 0 1 -1 .5 H5 a2 2 0 0 1 -2 -2 Z" fill="#1a9bd7"/><rect x="0" y="4.500" width="13.500" height="13.500" rx="1.300" fill="#0f6cbd"/><ellipse cx="6.700" cy="11.200" rx="3.200" ry="3.700" stroke="#fff" stroke-width="1.700" fill="none"/></svg>
<svg class="abs" style="left:546px;top:8px" width="22" height="22" viewBox="0 0 22 22"><path d="M1.500 2 L20 .6 a.8 .8 0 0 1 .9 .8 V20.600 a.8 .8 0 0 1 -.9 .8 L1.500 20.500 a.8 .8 0 0 1 -.8 -.8 V2.800 a.8 .8 0 0 1 .8 -.8 Z" fill="#f4f8fd" stroke="#3764b0" stroke-width="1"/><path d="M3.500 4.500 L6.500 16.500 H9 L10.800 9.500 L12.600 16.500 H15.100 L18.300 4.500 H15.600 L13.900 12 L12 4.500 H9.600 L7.800 12 L6.200 4.500 Z" fill="#1e4fa8"/><path d="M15.500 12 L21 10.500 V17.500 L17 19.800 L15.500 17 Z" fill="#e8eefa" stroke="#b9c9e6" stroke-width=".5"/><path d="M3 18.200 H15" stroke="#c9d6ee" stroke-width=".8"/></svg>
<svg class="abs" style="left:594.5px;top:8px" width="25" height="24" viewBox="0 0 25 24"><defs><linearGradient id="eg1" x1="0" y1="0" x2="1" y2="0"><stop offset="0" stop-color="#35c1f1"/><stop offset=".55" stop-color="#34c7c2"/><stop offset="1" stop-color="#5fd35a"/></linearGradient><linearGradient id="eg2" x1="0" y1="0" x2="0" y2="1"><stop offset="0" stop-color="#1b9de2"/><stop offset="1" stop-color="#1165b8"/></linearGradient></defs><circle cx="12.500" cy="12" r="12" fill="url(#eg2)"/><path d="M.8 10 C1.800 4 6.500 0 12.500 0 C19.500 0 24.500 5 24.500 10.500 C24.500 14.500 21.500 16.800 18.500 16.800 C16 16.800 14.500 15.800 14.500 14.800 C14.500 14 15.500 13.500 15.500 11.800 C15.500 9.500 13.500 7.500 10.500 7.500 C6.500 7.500 2.500 10.500 .8 14 Z" fill="url(#eg1)"/><path d="M9.500 10.500 C7.500 12.500 8 17 11 19.500 C14 22 19 21.500 22 19 C23 18 22.500 17.300 21.500 17.800 C19.500 18.800 16.500 18.800 14.500 17.300 C12.500 15.800 12.300 13.200 13.500 12 C12.500 10.300 10.800 9.800 9.500 10.500 Z" fill="#fff" opacity=".0"/><path d="M9.200 11.200 C8.500 14.800 10.500 19 14.800 20.200 C17.500 21 20.500 20.200 22.500 18.500 C23.300 17.800 22.800 17 21.800 17.400 C19.500 18.500 16.500 18.300 14.600 16.700 C13 15.300 12.800 13.300 13.700 12.200 C14.300 11.400 14.200 10.300 13.200 9.400 C12 8.500 9.800 8.800 9.200 11.200 Z" fill="#f2f7fb"/><path d="M.6 13 C.6 18 4 22.500 9 23.700 C11.500 24.300 14 24 16 23 C12 23 8.500 20 8.200 15.500 C8 12 10 9.500 12.500 9 C10 7.500 3 7.500 .6 13 Z" fill="#1562b3"/></svg>
<svg class="abs" style="left:644.5px;top:8.5px" width="23" height="22.500" viewBox="0 0 23 22.500"><defs><linearGradient id="og" x1="0" y1="0" x2="0" y2="1"><stop offset="0" stop-color="#ff2b3f"/><stop offset="1" stop-color="#b5091d"/></linearGradient></defs><ellipse cx="11.500" cy="11.250" rx="11.300" ry="11.100" fill="url(#og)"/><ellipse cx="11.500" cy="11.250" rx="5" ry="8.200" fill="#fdb683"/><path d="M15.500 .9 C20 2.500 22.800 6.500 22.800 11.250 C22.800 16 20 20 15.500 21.600 C18.500 19.500 19.800 15.500 19.800 11.250 C19.800 7 18.500 3 15.500 .9 Z" fill="#a3081a" opacity=".55"/></svg>
<svg class="abs" style="left:693.5px;top:8.500px" width="22.600" height="22.600" viewBox="0 0 24 24"><circle cx="12" cy="12" r="12" fill="#1ed760"/><path d="M5 8.300 C9.500 6.800 15.500 7.300 19.300 9.600" stroke="#121212" stroke-width="2.300" fill="none" stroke-linecap="round"/><path d="M5.700 12.100 C9.700 10.900 14.500 11.400 18 13.500" stroke="#121212" stroke-width="1.900" fill="none" stroke-linecap="round"/><path d="M6.400 15.600 C9.800 14.700 13.500 15 16.500 16.800" stroke="#121212" stroke-width="1.600" fill="none" stroke-linecap="round"/></svg>
<svg class="abs" style="left:741.8px;top:7.800000000000001px" width="23.4" height="23.4" viewBox="0 0 48 48">
<path d="M24 24 L3.200 12 A24 24 0 0 1 44.800 12 Z" fill="#ea4335"/>
<path d="M24 24 L44.800 12 A24 24 0 0 1 24 48 Z" fill="#fbbc04"/>
<path d="M24 24 L24 48 A24 24 0 0 1 3.200 12 Z" fill="#34a853"/>
<path d="M24 13 H44.300 A24 24 0 0 0 3.200 12 L13.500 29.500 Z" fill="#ea4335"/>
<path d="M33.500 29.500 L24 48 A24 24 0 0 0 44.800 12 L24 13 Z" fill="#fbbc04"/>
<path d="M14.500 29.500 L3.200 12 A24 24 0 0 0 24 48 L33.500 29.500 Z" fill="#34a853"/>
<circle cx="24" cy="24" r="11" fill="#fff"/><circle cx="24" cy="24" r="8.800" fill="#4285f4"/></svg>
<svg class="abs" style="left:752.8px;top:19px" width="14.600" height="14.600" viewBox="0 0 15 15"><defs><clipPath id="pc"><circle cx="7.500" cy="7.500" r="7.300"/></clipPath></defs><g clip-path="url(#pc)"><rect width="15" height="15" fill="#9fb3bd"/><rect y="0" width="15" height="5" fill="#b9cbd6"/><rect y="5" width="15" height="4" fill="#8d9a83"/><rect y="9" width="15" height="6" fill="#6f7a6a"/><ellipse cx="7.300" cy="14" rx="4" ry="5.500" fill="#1d1f24"/><circle cx="7.300" cy="7.300" r="2.300" fill="#23252b"/><ellipse cx="7.300" cy="7.800" rx="1.100" ry="1.300" fill="#b58d76"/></g></svg>
<svg class="abs" style="left:790.800px;top:8px" width="24.500" height="23.800" viewBox="0 0 100 100" preserveAspectRatio="none"><path d="M0 33 L9 25 L70 75 L70 98 Z" fill="#0f7fcf"/><path d="M0 67 L9 75 L70 25 L70 2 Z" fill="#1a8fdd"/><path d="M70 2 L99 14 L99 86 L70 98 Z" fill="#2aa8f4"/></svg>
<svg class="abs" style="left:840px;top:8px" width="24" height="24" viewBox="0 0 24 24"><defs><linearGradient id="xg" x1="0" y1="0" x2="0" y2="1"><stop offset="0" stop-color="#f08a45"/><stop offset=".12" stop-color="#f79a5a"/><stop offset=".3" stop-color="#f47a20"/><stop offset="1" stop-color="#f47416"/></linearGradient></defs><rect x=".4" y=".4" width="23.200" height="23.200" rx="3" fill="url(#xg)" stroke="#c9610f" stroke-width=".8"/><g fill="#fff"><circle cx="7.600" cy="8.400" r="4.300"/><circle cx="16.600" cy="8.400" r="4.300"/><circle cx="7.600" cy="15.600" r="4.300"/><circle cx="16.600" cy="15.600" r="4.300"/><rect x="4.500" y="8.400" width="15.200" height="7.200"/><rect x="9" y="7" width="6.200" height="10"/></g><g fill="#f4700f"><rect x="6.400" y="7.200" width="2.400" height="9.600" rx="1.200"/><rect x="15.400" y="7.200" width="2.400" height="9.600" rx="1.200"/><rect x="7.500" y="10.900" width="9" height="2.200"/></g></svg>
<svg class="abs" style="left:889px;top:8px" width="24" height="24" viewBox="0 0 24 24"><ellipse cx="11.500" cy="8.500" rx="10.500" ry="6.500" transform="rotate(-12 11.500 8.500)" stroke="#e0353f" stroke-width="1" fill="#fbeff0"/><ellipse cx="8" cy="14" rx="7" ry="3" transform="rotate(-15 8 14)" stroke="#eb8b92" stroke-width=".6" fill="none"/><path d="M7 7 L17 15.500 M13 4.500 L15 16" stroke="#8e979f" stroke-width="1.300" fill="none"/><ellipse cx="15.300" cy="19" rx="2" ry="3.200" transform="rotate(18 15.300 19)" stroke="#1d7fc9" stroke-width="1.500" fill="none"/><ellipse cx="20" cy="16.200" rx="2" ry="3.200" transform="rotate(-55 20 16.200)" stroke="#1d7fc9" stroke-width="1.500" fill="none"/></svg>
<svg class="abs" style="left:939px;top:9px" width="22" height="22" viewBox="0 0 22 22"><defs><linearGradient id="pg" x1="0" y1="0" x2="1" y2="1"><stop offset="0" stop-color="#1b6fd6"/><stop offset=".6" stop-color="#3f63c9"/><stop offset="1" stop-color="#7a4fb5"/></linearGradient><clipPath id="pcl"><rect width="22" height="22" rx="3.500"/></clipPath></defs><g clip-path="url(#pcl)"><rect width="22" height="22" fill="url(#pg)"/><path d="M-1 19 L10.500 7.500 a1.500 1.500 0 0 1 2.100 0 L23 18 V23 H-1 Z" fill="#35b8f2"/><path d="M4 23 L13.500 13.500 a1.500 1.500 0 0 1 2.100 0 L23 21 V23 Z" fill="#1a7fd8"/><path d="M-1 19 L3 15 L11 23 H-1 Z" fill="#5fd0f7" opacity=".6"/><circle cx="16.500" cy="4.800" r="1.900" fill="#fff"/></g></svg>
<svg class="abs" style="left:1041px;top:7px" width="26" height="25" viewBox="0 0 26 25"><defs><linearGradient id="cg" x1="0" y1="0" x2="0" y2="1"><stop offset="0" stop-color="#e6effc"/><stop offset=".5" stop-color="#bfd6f5"/><stop offset="1" stop-color="#78a6e6"/></linearGradient></defs><path d="M9.800 1.900 A5.800 5.800 0 1 0 14.200 10.800 A5 5 0 0 1 9.800 1.900 Z" fill="#f6a623"/><path d="M6 23.600 C2.500 23.600 1 21.500 1 19.300 C1 17 2.800 15.300 5 15.300 C5.500 12.500 8 10.700 11 10.700 C13.500 10.700 15.500 12 16.500 13.800 C17.200 13.500 18 13.300 18.800 13.300 C22 13.300 24.800 15.600 24.800 18.700 C24.800 21.500 22.500 23.600 19.800 23.600 Z" fill="url(#cg)"/><circle cx="18.800" cy="7.200" r="5.800" fill="#d92b2b"/><path d="M17.300 5.700 L19.200 4.300 V10.300" stroke="#fff" stroke-width="1.300" fill="none"/></svg>
<span class="t" style="left:1074.80px;top:11.00px;font-size:13.5px;line-height:19px;color:#111;letter-spacing:-0.805px;">26°C</span>
<svg class="abs" style="left:1128.500px;top:15.500px" width="13" height="8" viewBox="0 0 13 8"><path d="M.8 7.300 L6.500 1.200 L12.200 7.300" stroke="#111" stroke-width="1.400" fill="none"/></svg>
<svg class="abs" style="left:1153px;top:11px" width="13" height="17" viewBox="0 0 13 17"><path d="M2.500 3 C4.500 .3 8.500 .3 10.500 3 M2.500 14 C4.500 16.700 8.500 16.700 10.500 14" stroke="#222" stroke-width="1" fill="none"/><rect x=".6" y="4.600" width="8" height="7.800" rx="1.500" stroke="#111" stroke-width="1.100" fill="none"/><path d="M8.600 7.500 L12 5.500 V11.500 L8.600 9.500" stroke="#111" stroke-width="1.100" fill="none"/></svg>
<svg class="abs" style="left:1175.500px;top:15.500px" width="16" height="10" viewBox="0 0 16 10"><rect x=".6" y=".6" width="13.300" height="8.800" stroke="#111" stroke-width="1.200" fill="none"/><rect x="14.200" y="3" width="1.500" height="4" fill="#111"/><rect x="2.300" y="2.400" width="4.200" height="5.200" fill="#111"/></svg>
<svg class="abs" style="left:1201px;top:14px" width="14" height="13" viewBox="0 0 14 13"><path d="M.8 12 C.8 5.500 6 .9 12.800 .9" stroke="#9a9a9a" stroke-width="1" fill="none"/><path d="M4.200 12.200 C4.200 7.500 8 4.300 13 4.300" stroke="#333" stroke-width="1.300" fill="none"/><path d="M7.500 12.300 C7.500 9.500 10 7.600 13 7.600" stroke="#222" stroke-width="1.300" fill="none"/><circle cx="11.800" cy="11.500" r="1.500" fill="#111"/></svg>
<svg class="abs" style="left:1223px;top:13.500px" width="17" height="14" viewBox="0 0 17 14"><path d="M.6 4.500 H3.500 L7.500 .8 V13.200 L3.500 9.500 H.6 Z" stroke="#111" stroke-width="1.100" fill="none" stroke-linejoin="round"/><path d="M9.500 4.500 C10.700 5.800 10.700 8.200 9.500 9.500" stroke="#111" stroke-width="1.100" fill="none"/><path d="M11.800 2.500 C14 4.800 14 9.200 11.800 11.500" stroke="#444" stroke-width="1" fill="none"/><path d="M14 .6 C17 4 17 10 14 13.400" stroke="#aaa" stroke-width=".9" fill="none"/></svg>
<span class="t" style="left:1264.20px;top:2.00px;font-size:12px;line-height:18px;color:#111;letter-spacing:-0.964px;">20:18</span>
<span class="t" style="left:1250.10px;top:20.00px;font-size:12px;line-height:18px;color:#111;letter-spacing:-0.454px;">18/05/2025</span>
<svg class="abs" style="left:1325px;top:12px" width="17" height="17" viewBox="0 0 17 17"><path d="M.7 .7 H15.500 V12.400 H11.200 L8 15.400 L4.800 12.400 H.7 Z" stroke="#111" stroke-width="1.400" fill="none" stroke-linejoin="miter"/></svg>
<div class="abs" style="left:1361px;top:0;width:1px;height:40px;background:#b9b9b9"></div>
</div>
</body>
</html>
